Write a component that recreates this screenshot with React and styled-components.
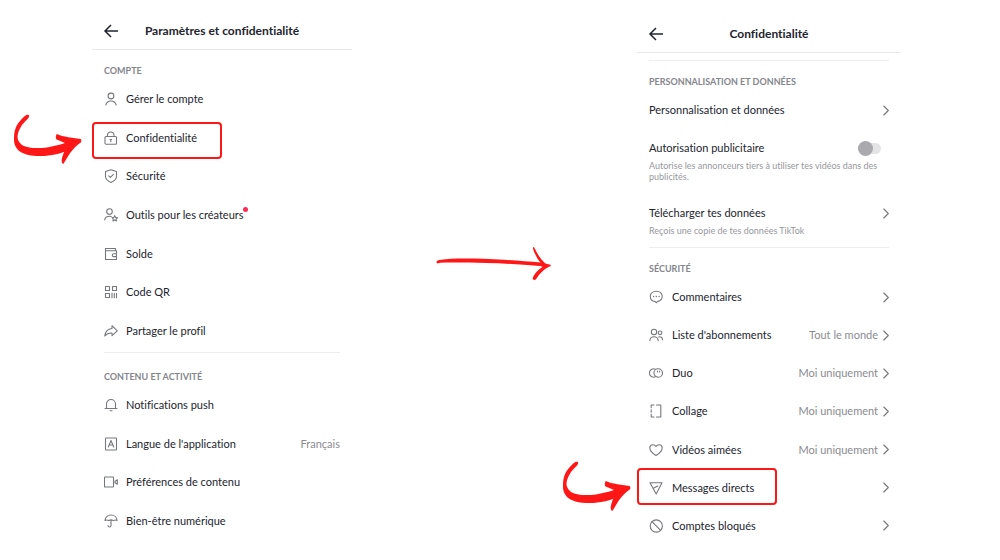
import React, { useState } from "react";
import styled, { createGlobalStyle } from "styled-components";

const red = "#ff1616";

const GlobalStyle = createGlobalStyle`
  * { box-sizing: border-box; }
  body {
    margin: 0;
    background: #fff;
    color: #22242e;
    font-family: Lato, "Open Sans", sans-serif;
    font-size: 11px;
    line-height: 20px;
    font-variant-ligatures: none;
  }
`;

const Page = styled.main`
  display: grid;
  grid-template-columns: 92fr 260fr 285fr 264fr 99fr;
  align-items: start;
`;

const Screen = styled.section`
  grid-column: ${(p) => p.$column};
  min-width: 0;
`;

const Header = styled.header`
  display: grid;
  grid-template-columns: 16px 1fr 16px;
  align-items: center;
  padding: ${(p) => p.$top}px 11px 8px;
  border-bottom: 1px solid #e8e8e9;
`;

const Title = styled.h1`
  margin: 0;
  font-size: 12px;
  line-height: 20px;
  font-weight: 700;
  text-align: center;
  white-space: nowrap;
`;

const BackButton = styled.button`
  display: flex;
  padding: 0;
  border: 0;
  background: none;
  color: inherit;
  cursor: pointer;
`;

const Body = styled.div`
  padding: 0 12px;
`;

const Divider = styled.hr`
  margin: ${(p) => p.$top}px 0 0;
  border: 0;
  border-top: 1px solid #ededee;
`;

const SectionTitle = styled.h2`
  margin: ${(p) => p.$top || 12}px 0 0;
  color: #85868c;
  font-size: 9px;
  line-height: 18px;
  font-weight: 700;
  text-transform: uppercase;
`;

const List = styled.ul`
  display: grid;
  grid-auto-rows: 1fr;
  min-height: ${(p) => p.$height}px;
  margin: 0;
  padding: 0;
  list-style: none;
`;

const Item = styled.li`
  position: relative;
  display: grid;
`;

const Row = styled.a`
  display: flex;
  align-items: center;
  gap: ${(p) => p.$gap}px;
  color: inherit;
  text-decoration: none;
  white-space: nowrap;
`;

const Label = styled.span`
  position: relative;
`;

const Dot = styled.i`
  position: absolute;
  top: 2px;
  right: -4px;
  width: 5px;
  height: 5px;
  border-radius: 50%;
  background: #fe2c55;
`;

const Value = styled.span`
  display: flex;
  align-items: center;
  gap: 5px;
  margin-left: auto;
  color: #8a8b91;
`;

const Highlight = styled.span`
  position: absolute;
  top: ${(p) => p.$top}px;
  left: -12px;
  width: ${(p) => p.$width}px;
  height: 37px;
  border: 2px solid ${red};
  border-radius: 4px;
  pointer-events: none;
`;

const Hook = styled.svg`
  position: absolute;
  top: ${(p) => p.$top}px;
  left: ${(p) => p.$left}px;
  pointer-events: none;
`;

const Setting = styled.div`
  display: grid;
  grid-template-columns: 1fr auto;
  padding: 9px 0 ${(p) => p.$bottom || 9}px;
  color: inherit;
  text-decoration: none;
`;

const Side = styled.span`
  display: flex;
  align-items: center;
  height: 20px;
`;

const Note = styled.small`
  grid-column: 1 / -1;
  margin: 2px 8px 0 0;
  color: #97989d;
  font-size: 9px;
  line-height: 11px;
`;

const Switch = styled.input`
  appearance: none;
  display: flex;
  align-items: center;
  width: 23px;
  height: 11px;
  margin: 0 8px 0 0;
  border-radius: 6px;
  background: #e4e4e6;
  cursor: pointer;

  &::before {
    content: "";
    width: 15px;
    height: 15px;
    flex: none;
    border-radius: 50%;
    background: #a9a9ae;
  }

  &:checked {
    justify-content: flex-end;
  }
`;

const Between = styled.div`
  display: flex;
  justify-content: center;
  padding-top: 246px;
`;

const IconSvg = styled.svg`
  flex: none;
  fill: none;
  stroke: #77787d;
  stroke-width: 1.1;
  stroke-linecap: round;
  stroke-linejoin: round;
`;

const icons = {
  user: <><circle cx="7" cy="4" r="2.900" /><path d="M1.800 13C2.600 10.300 4.500 9 7 9s4.400 1.300 5.200 4" /></>,
  lock: <><rect x="1" y="5.500" width="11.500" height="7.700" rx="1" /><path d="M3.500 5.500V4.200a3.200 3.200 0 0 1 6.500 0v1.300M6.800 8.500v2.200M6 8.500h1.500" /></>,
  shield: <><path d="M7 .8 12.500 2.500v5c0 2.700-2.300 4.500-5.500 5.900C3.800 12 1.500 10.200 1.500 7.500v-5z" /><path d="m4.700 6.800 1.700 1.600 3-3" /></>,
  creator: <><circle cx="5.500" cy="3.500" r="2.800" /><path d="M.7 12c.4-2.500 2.300-3.700 4.800-3.700.7 0 1.200.1 1.700.3" /><path d="m10.700 7.700.9 1.700 1.900.3-1.400 1.300.4 1.900-1.800-.9-1.700.9.3-1.900L8 9.700l1.800-.3z" /></>,
  wallet: <><path d="M11.500 3.800V1.500h-10v11h11V3.800h-11M12.500 6.800H9.700a1.400 1.400 0 0 0 0 2.800h2.800" /></>,
  qr: <><path d="M1.500 1.500h4v4h-4zM8.500 1.500h4v4h-4zM1.500 8.500h4v4h-4zM8 8.300v4.400M10.300 8.300v4.400M12.500 8.300v4.400" /></>,
  share: <path d="M8 1.700 13.300 6.800 8 11.600V9C5 8.800 2.700 9.700.8 12 1.200 8 3.500 4.900 8 4.500z" />,
  bell: <><path d="M2.500 10.500V6a4.500 4.500 0 0 1 9 0v4.500M1 10.500h12" /><path d="M6 12.800h2" /></>,
  language: <><rect x="1.500" y="1" width="11" height="12" rx=".5" /><path d="m4.300 10 2.700-6.500L9.700 10M5.200 8h3.600" /></>,
  video: <><rect x=".5" y="2" width="9" height="10" rx=".5" /><path d="m11 6.300 2.300-1.500v4.400L11 7.700z" /></>,
  umbrella: <><path d="M1 6.500C1 3.300 3.600 1 7 1s6 2.300 6 5.500c-1.200-.7-2.500-.7-3.500.1-1.500-.9-3.500-.9-5 0-1-.8-2.300-.8-3.500-.1zM7 6.500v5c0 2-3 2-3 0" /></>,
  comment: <><path d="M7.300 1.200c3.500 0 5.900 2.200 5.900 5 0 2.700-2 4.600-4.500 5.200l-1.200 1.300-1.600-1.200C3 11.200 1.300 9.300 1.300 6.300c0-2.900 2.500-5.100 6-5.100z" /><path d="M4.600 6.500h.1M7.300 6.500h.1M10 6.500h.1" strokeWidth="1.300" /></>,
  users: <><circle cx="5" cy="4" r="2.700" /><circle cx="11" cy="4.800" r="1.800" /><path d="M.8 12.800C1 10.200 2.800 8.800 5 8.800s4 1.400 4.200 4M9.700 9c2-.7 3.600.6 3.800 2.800" /></>,
  duet: <><path d="M6.400 10.800a4.200 4.200 0 1 1 0-7.600" /><rect x="4.900" y="2.800" width="8.600" height="8.400" rx="4.200" /><path d="M8.500 5v1M10.700 5v1" /></>,
  stitch: <><path d="M5 1H2.200v2.700M2.200 5.800v2.400M2.200 10.300V13H5M7.500 1h4.300v12H7.500" /></>,
  heart: <path d="M7 12.500C4 10.500.8 8 .8 4.900.8 1.500 5 .5 7 3.500 9 .5 13.200 1.500 13.200 4.900 13.200 8 10 10.500 7 12.500z" />,
  send: <><path d="M1 1.800h12L7.200 13z" /><path d="M4.300 7.300 8.800 4.900" /></>,
  block: <><circle cx="7.300" cy="7" r="6.100" /><path d="m3 2.700 8.600 8.600" /></>,
};

const Icon = ({ name }) => (
  <IconSvg width="14" height="14" viewBox="0 0 14 14" aria-hidden="true">
    {icons[name]}
  </IconSvg>
);

const Chevron = () => (
  <IconSvg width="6" height="11" viewBox="0 0 6 11" aria-hidden="true">
    <path d="m.8 1 4.500 4.500L.8 10" />
  </IconSvg>
);

const account = [
  { icon: "user", label: "Gérer le compte" },
  { icon: "lock", label: "Confidentialité", highlight: true },
  { icon: "shield", label: "Sécurité" },
  { icon: "creator", label: "Outils pour les créateurs", dot: true },
  { icon: "wallet", label: "Solde" },
  { icon: "qr", label: "Code QR" },
  { icon: "share", label: "Partager le profil" },
];

const content = [
  { icon: "bell", label: "Notifications push" },
  { icon: "language", label: "Langue de l'application", value: "Français" },
  { icon: "video", label: "Préférences de contenu" },
  { icon: "umbrella", label: "Bien-être numérique" },
];

const safety = [
  { icon: "comment", label: "Commentaires" },
  { icon: "users", label: "Liste d'abonnements", value: "Tout le monde" },
  { icon: "duet", label: "Duo", value: "Moi uniquement" },
  { icon: "stitch", label: "Collage", value: "Moi uniquement" },
  { icon: "heart", label: "Vidéos aimées", value: "Moi uniquement" },
  { icon: "send", label: "Messages directs", highlight: true },
  { icon: "block", label: "Comptes bloqués" },
];

// where the red box and the hooked arrow sit around the highlighted row
const accountMark = { top: 3, width: 130, hookTop: -5, hookLeft: -91 };
const safetyMark = { top: -1, width: 140, hookTop: -8, hookLeft: -87 };

const ScreenHeader = ({ title, top }) => (
  <Header $top={top}>
    <BackButton type="button" aria-label="Retour">
      <svg width="16" height="14" viewBox="0 0 16 14" fill="none" stroke="currentColor" strokeWidth="1.500">
        <path d="M8 1 2 7l6 6M2 7h13" />
      </svg>
    </BackButton>
    <Title>{title}</Title>
  </Header>
);

const Menu = ({ items, height, gap = 8, mark, chevrons }) => (
  <List $height={height}>
    {items.map((item) => (
      <Item key={item.label}>
        <Row href="#" $gap={gap}>
          <Icon name={item.icon} />
          <Label>
            {item.label}
            {item.dot && <Dot />}
          </Label>
          {(item.value || chevrons) && (
            <Value>
              {item.value}
              {chevrons && <Chevron />}
            </Value>
          )}
        </Row>
        {item.highlight && (
          <>
            <Highlight $top={mark.top} $width={mark.width} />
            <Hook
              $top={mark.hookTop}
              $left={mark.hookLeft}
              width="70"
              height="51"
              viewBox="0 0 70 51"
              fill={red}
              aria-hidden="true"
            >
              <path d="M13 1.300C15 .3 16.800 1 16 2.800 15.500 5 11 8 8.700 11.500 6.500 15 4.500 19 4.500 22.700c0 3.500 2 7 6.500 9.300 3 1.300 6 1.700 9.300 1.900 5 .3 9 0 13.700-.5C40 32.500 46 31 52 29l-8.300-3.500c-1.200-.7-1.200-3.500 0-5.500C47 21.500 51 22.500 55.300 23.200L67.700 25c.8 1 .8 2.500.3 3.300C63.500 31.500 59.500 35.500 57 39.300 54.500 43 52.500 47 50.300 50c-1-.2-1.800-2-1.600-4 .3-2.800 1.300-5.500 2.600-8.300C47 39.500 42 40.500 37 41.200c-4.500.7-9 1-13.300.8-5 0-9.400-.9-13.400-2.700C7 38 5 36.500 3.700 34.300 2 32 1 29 1 26c0-3.500 0-6.700 1-10C3 12.500 4.500 9.800 7 7c2-2.300 4-4.500 6-5.700z" />
            </Hook>
          </>
        )}
      </Item>
    ))}
  </List>
);

const App = () => {
  const [ ads, setAds ] = useState(false);

  return (
    <>
      <GlobalStyle />
      <Page>
        <Screen $column={2}>
          <ScreenHeader title="Paramètres et confidentialité" top={21} />
          <Body>
            <SectionTitle>Compte</SectionTitle>
            <Menu items={account} height={270} mark={accountMark} />
            <Divider $top={2} />
            <SectionTitle $top={15}>Contenu et activité</SectionTitle>
            <Menu items={content} height={154} />
          </Body>
        </Screen>

        <Between>
          <svg width="118" height="35" viewBox="0 0 118 35" fill={red} aria-hidden="true">
            <path d="M.5 16.500C.3 15 1.500 14.200 3.500 14c8-1.600 16-1.600 24-1.600 14 0 27 .5 40 1.300 13 .9 25 1.800 37 2.700-1.800-2-3-3.500-4-5.700C99 8 97.500 5 97 2.500c0-1.800 1-2 1.600-.3 1.500 3 3 6 5.400 9.300 1.800 2.400 3.500 4.500 6 6.300l4.500 1c.6.800 0 1.400-1.500 2-3 1.600-5.500 3.400-8 5.900-2 2-3.300 4-5 6.600-1.500 1.300-3.800.2-3.300-1.300.8-2.300 2.200-4.300 4-6.300 1.800-2 4-3.700 6-5l-2.700-.6c-18-1.600-36-2.700-53.300-3.100-16-.3-31-.5-46.700-.3-1.500 1-3.300.8-3.500-.2z" />
          </svg>
        </Between>

        <Screen $column={4}>
          <ScreenHeader title="Confidentialité" top={24} />
          <Body>
            <Divider $top={7} />
            <SectionTitle>Personnalisation et données</SectionTitle>
            <Setting as="a" href="#">
              <span>Personnalisation et données</span>
              <Side>
                <Chevron />
              </Side>
            </Setting>
            <Setting as="label" $bottom={12}>
              <span>Autorisation publicitaire</span>
              <Side>
                <Switch
                  type="checkbox"
                  role="switch"
                  checked={ads}
                  onChange={(e) => setAds(e.target.checked)}
                />
              </Side>
              <Note>
                Autorise les annonceurs tiers à utiliser tes vidéos dans des publicités.
              </Note>
            </Setting>
            <Setting as="a" href="#" $bottom={11}>
              <span>Télécharger tes données</span>
              <Side>
                <Chevron />
              </Side>
              <Note>Reçois une copie de tes données TikTok</Note>
            </Setting>
            <Divider $top={0} />
            <SectionTitle>Sécurité</SectionTitle>
            <Menu items={safety} height={267} gap={9} mark={safetyMark} chevrons />
          </Body>
        </Screen>
      </Page>
    </>
  );
};

export default App;
